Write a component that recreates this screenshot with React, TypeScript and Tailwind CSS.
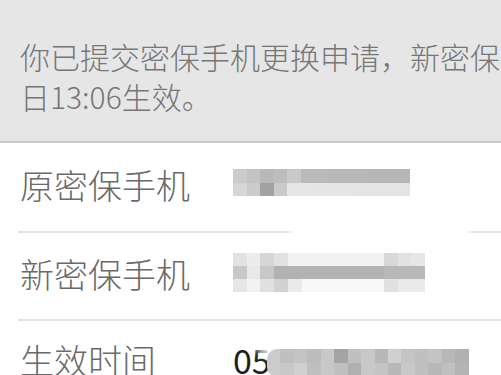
import React from "react";

const font = { fontFamily: '"Noto Sans CJK SC", "Noto Sans", sans-serif' };

const r1 = [
  ["bg-[#cbcbcb]", "bg-[#c3c3c3]", "bg-[#b9b9b9]", "bg-[#bdbdbd]", "bg-[#c9c9c9]", "bg-[#bababa]", "bg-[#bababa]", "bg-[#b8b8b8]", "bg-[#b8b8b8]", "bg-[#b8b8b8]", "bg-[#b7b7b7]", "bg-[#b6b6b6]", "bg-[#b6b6b6]"],
  ["bg-[#d6d6d6]", "bg-[#cbcbcb]", "bg-[#a2a2a2]", "bg-[#c9c9c9]", "bg-[#e6e6e6]", "bg-[#e6e6e6]", "bg-[#e5e5e5]", "bg-[#e5e5e5]", "bg-[#e5e5e5]", "bg-[#e4e4e4]", "bg-[#e4e4e4]", "bg-[#e4e4e4]", "bg-[#e4e4e4]"],
];

const r2 = [
  ["bg-[#e2e2e2]", "bg-[#ececec]", "bg-[#d6d6d6]", "bg-[#e2e2e2]", "bg-[#f2f2f2]", "bg-[#f2f2f2]", "bg-[#f2f2f2]", "bg-[#f2f2f2]", "bg-[#f2f2f2]", "bg-[#f2f2f2]", "bg-[#f2f2f2]", "bg-[#d8d8d8]", "bg-[#e2e2e2]", "bg-[#e6e6e6]"],
  ["bg-[#c8c8c8]", "bg-[#e8e8e8]", "bg-[#c8c8c8]", "bg-[#b2b2b2]", "bg-[#b2b2b2]", "bg-[#b2b2b2]", "bg-[#b2b2b2]", "bg-[#b2b2b2]", "bg-[#b2b2b2]", "bg-[#b2b2b2]", "bg-[#b2b2b2]", "bg-[#b8b8b8]", "bg-[#b8b8b8]", "bg-[#b8b8b8]"],
  ["bg-[#e6e6e6]", "bg-[#f2f2f2]", "bg-[#e0e0e0]", "bg-[#d2d2d2]", "bg-[#eaeaea]", "bg-[#f8f8f8]", "bg-[#f8f8f8]", "bg-[#f8f8f8]", "bg-[#f8f8f8]", "bg-[#f8f8f8]", "bg-[#f8f8f8]", "bg-[#e0e0e0]", "bg-[#eaeaea]", "bg-[#eaeaea]"],
];

const r3 = [
  ["bg-[#cccccc]", "bg-[#c0c0c0]", "bg-[#c4c4c4]", "bg-[#bcbcbc]", "bg-[#c8c8c8]", "bg-[#a4a4a4]", "bg-[#c0c0c0]", "bg-[#c8c8c8]", "bg-[#b8b8b8]", "bg-[#d0d0d0]", "bg-[#c4c4c4]", "bg-[#c0c0c0]", "bg-[#c4c4c4]", "bg-[#b8b8b8]", "bg-[#b0b0b0]"],
  ["bg-[#cccccc]", "bg-[#c8c8c8]", "bg-[#d0d0d0]", "bg-[#c0c0c0]", "bg-[#c8c8c8]", "bg-[#c0c0c0]", "bg-[#b0b0b0]", "bg-[#c8c8c8]", "bg-[#c4c4c4]", "bg-[#b8b8b8]", "bg-[#c8c8c8]", "bg-[#c0c0c0]", "bg-[#b8b8b8]", "bg-[#c0c0c0]", "bg-[#b4b4b4]"],
];

function Pixels({ rows, className }: { rows: string[][]; className: string }) {
  return (
    <div className={"flex flex-col blur-[0.6px] " + className}>
      {rows.map((row, i) => (
        <div key={i} className="flex flex-1">
          {row.map((c, j) => (
            <div key={j} className={"flex-1 " + c} />
          ))}
        </div>
      ))}
    </div>
  );
}

export default function App() {
  return (
    <div className="w-[501px] h-[375px] overflow-hidden bg-white font-light" style={font}>
      <div className="bg-[#e6e6e6] pt-[36px] pb-[25px] pl-[20px] text-[30px] leading-[40px] text-[#767676] border-b-2 border-[#cacaca]">
        <div className="whitespace-nowrap">你已提交密保手机更换申请，新密保</div>
        <div className="whitespace-nowrap">日13:06生效。</div>
      </div>

      <div className="flex flex-col">
        <div className="flex items-center h-[88px] pl-[20px] text-[34px] text-[#6a6a6a]">
          <span className="w-[213px] leading-[40px] mb-[4px]">原密保手机</span>
          <Pixels rows={r1} className="w-[177px] h-[27px] mb-[9px]" />
        </div>
        <div className="relative ml-[18px] h-[2px] bg-[#e2e2e2]">
          <div className="absolute left-[270px] top-[-6px] w-[184px] h-[12px] bg-white rounded-full blur-[3px]" />
        </div>

        <div className="flex items-center h-[86px] pl-[20px] text-[34px] text-[#6a6a6a]">
          <span className="w-[213px] leading-[40px] mb-[4px]">新密保手机</span>
          <Pixels rows={r2} className="w-[192px] h-[40px] mb-[7px]" />
        </div>
        <div className="ml-[18px] h-[2px] bg-[#e2e2e2]" />

        <div className="flex items-start h-[88px] pl-[20px] text-[34px] text-[#6a6a6a]">
          <span className="w-[213px] leading-[40px] mt-[19px]">生效时间</span>
          <div className="relative flex items-start mt-[19px]">
            <span className="leading-[40px] text-[#1e1e1e] font-normal">05</span>
            <div className="absolute left-[22px] top-[-14px] w-[40px] h-[30px] bg-white rounded-full blur-[4px]" />
            <Pixels rows={r3} className="relative ml-[-4px] mt-[9px] w-[202px] h-[28px] rounded-l-[10px] overflow-hidden" />
          </div>
        </div>
      </div>
    </div>
  );
}
